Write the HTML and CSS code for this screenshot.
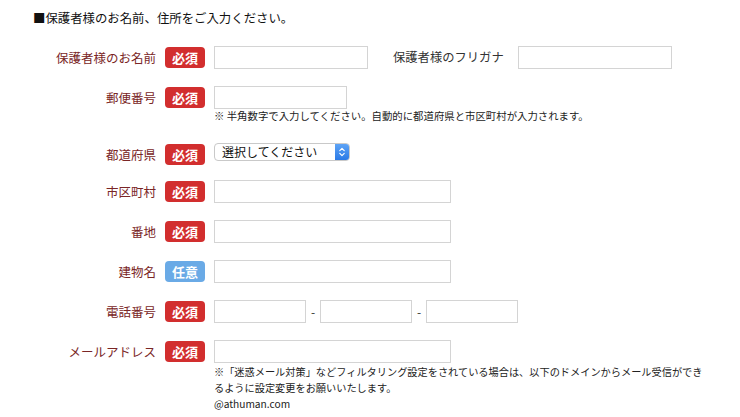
FILE: index.html
```html
<!DOCTYPE html>
<html lang="ja">
<head>
<meta charset="utf-8">
<title>保護者様情報入力</title>
<link rel="stylesheet" href="styles.css">
</head>
<body>
<p class="heading">■保護者様のお名前、住所をご入力ください。</p>
<form class="form">
  <div class="row">
    <label class="label">保護者様のお名前</label>
    <span class="badge badge--req">必須</span>
    <input class="input input--name" type="text">
    <label class="sublabel">保護者様のフリガナ</label>
    <input class="input input--name" type="text">
  </div>
  <div class="row row--zip">
    <label class="label">郵便番号</label>
    <span class="badge badge--req">必須</span>
    <div class="field">
      <input class="input input--zip" type="text">
      <p class="note">※ 半角数字で入力してください。自動的に都道府県と市区町村が入力されます。</p>
    </div>
  </div>
  <div class="row row--select">
    <label class="label">都道府県</label>
    <span class="badge badge--req">必須</span>
    <div class="select">
      <select class="select__el"><option>選択してください</option></select>
      <span class="select__stepper">
        <svg width="14" height="18" viewBox="0 0 14 18"><path d="M4.5 7.5 L7 5 L9.5 7.5 M4.5 10.5 L7 13 L9.5 10.5" fill="none" stroke="#fff" stroke-width="1.3" stroke-linecap="round" stroke-linejoin="round"/></svg>
      </span>
    </div>
  </div>
  <div class="row">
    <label class="label">市区町村</label>
    <span class="badge badge--req">必須</span>
    <input class="input input--wide" type="text">
  </div>
  <div class="row">
    <label class="label">番地</label>
    <span class="badge badge--req">必須</span>
    <input class="input input--wide" type="text">
  </div>
  <div class="row">
    <label class="label">建物名</label>
    <span class="badge badge--opt">任意</span>
    <input class="input input--wide" type="text">
  </div>
  <div class="row">
    <label class="label">電話番号</label>
    <span class="badge badge--req">必須</span>
    <input class="input input--tel" type="text">
    <span class="dash">-</span>
    <input class="input input--tel" type="text">
    <span class="dash">-</span>
    <input class="input input--tel" type="text">
  </div>
  <div class="row">
    <label class="label">メールアドレス</label>
    <span class="badge badge--req">必須</span>
    <div class="field">
      <input class="input input--wide" type="text">
      <p class="note note--mail">※「迷惑メール対策」などフィルタリング設定をされている場合は、以下のドメインからメール受信ができ<br>るように設定変更をお願いいたします。<br>@athuman.com</p>
    </div>
  </div>
</form>
</body>
</html>
```
FILE: styles.css
```css
html, body {
  margin: 0;
  padding: 0;
  background: #fff;
}
body {
  font-family: "Noto Sans CJK JP", "Noto Sans", sans-serif;
  color: #222;
}
.heading {
  margin: 10px 0 0 33px;
  font-size: 12.4px;
  line-height: 16px;
  color: #111;
}
.form {
  margin-top: 20px;
}
.row {
  display: flex;
  align-items: flex-start;
  margin-bottom: 17px;
}
.row--zip {
  margin-bottom: 20px;
}
.row--select {
  height: 20px;
}
.label {
  width: 156px;
  flex: none;
  text-align: right;
  font-size: 12.5px;
  line-height: 23px;
  color: #7a2626;
}
.badge {
  flex: none;
  width: 40px;
  height: 21px;
  margin: 1px 9px 0 9px;
  border-radius: 4px;
  text-align: center;
  font-size: 13px;
  font-weight: bold;
  line-height: 21px;
  color: #fff;
}
.badge--req {
  background: #d22e2e;
}
.badge--opt {
  background: #6aaae6;
}
.field {
  display: flex;
  flex-direction: column;
}
.input {
  box-sizing: border-box;
  height: 23px;
  margin: 0;
  padding: 2px 4px;
  border: 1px solid #d4d4d4;
  background: #fff;
  flex: none;
}
.input--name {
  width: 154px;
}
.input--zip {
  width: 133px;
}
.input--wide {
  width: 237px;
}
.input--tel {
  width: 92px;
}
.sublabel {
  margin: 0 14px 0 25px;
  font-size: 12.3px;
  line-height: 23px;
  color: #333;
}
.dash {
  width: 14px;
  text-align: center;
  font-size: 12px;
  line-height: 23px;
  color: #333;
}
.note {
  margin: 0;
  font-size: 10.4px;
  line-height: 14px;
  color: #222;
  white-space: nowrap;
}
.note--mail {
  font-size: 10.2px;
  line-height: 16px;
  margin-top: 1px;
}
.select {
  box-sizing: border-box;
  display: flex;
  width: 136px;
  height: 18px;
  border: 1px solid #c9c9c9;
  border-radius: 4px;
  background: #fff;
  overflow: hidden;
}
.select__el {
  appearance: none;
  -webkit-appearance: none;
  flex: 1;
  min-width: 0;
  margin: 0;
  border: none;
  background: transparent;
  padding: 0 0 0 7px;
  font-family: "Noto Sans CJK JP", "Noto Sans", sans-serif;
  font-size: 12px;
  line-height: 16px;
  height: 16px;
  color: #111;
}
.select__stepper {
  flex: none;
  width: 14px;
  height: 16px;
  display: flex;
  align-items: center;
  justify-content: center;
  background: linear-gradient(#5ea4f6, #2b7ae6);
}
.select__stepper svg {
  display: block;
  width: 14px;
  height: 16px;
}
```
